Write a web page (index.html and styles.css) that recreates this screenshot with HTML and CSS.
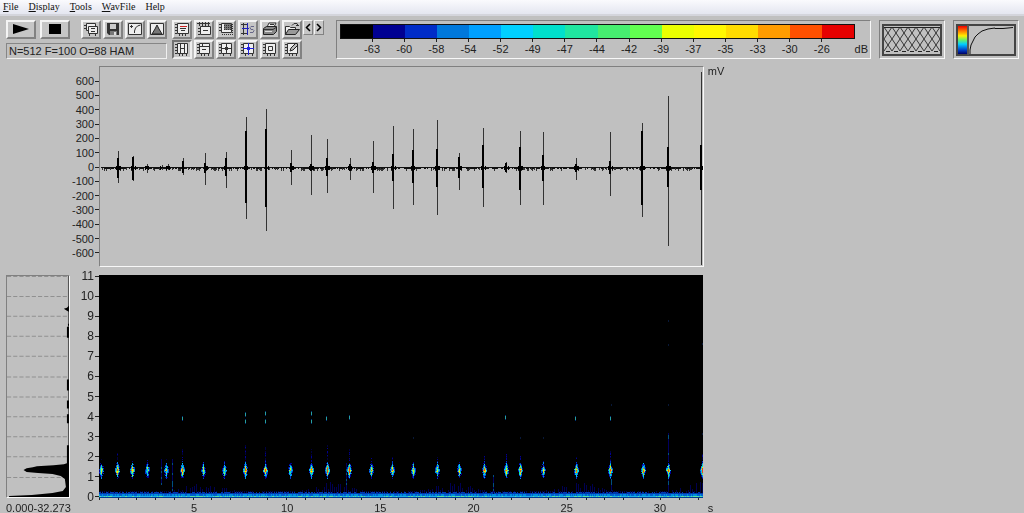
FILE: index.html
```html
<!DOCTYPE html>
<html lang="en">
<head>
<meta charset="utf-8">
<title>Sound Analysis</title>
<link rel="stylesheet" href="styles.css">
</head>
<body>
<nav class="menubar" aria-label="Main menu">
  <button class="menu"><u>F</u>ile</button>
  <button class="menu"><u>D</u>isplay</button>
  <button class="menu"><u>T</u>ools</button>
  <button class="menu"><u>W</u>avFile</button>
  <button class="menu">Help</button>
</nav>

<header class="toolbar">
  <div class="transport">
    <div class="row">
      <button class="btn wide" aria-label="Play"><svg width="20" height="13" viewBox="0 0 20 13"><path d="M2 2L18 7L2 12z"/></svg></button>
      <button class="btn wide" aria-label="Stop"><svg width="12" height="13" viewBox="0 0 12 13"><path d="M0 2h12v10H0z"/></svg></button>
      <div class="row tight push">
        <button class="btn" aria-label="Copy"><svg class="ico" viewBox="0 0 16 14"><path class="w" d="M3.500 1.500h9v7h-9z"/><path class="w" d="M5.500 4.500h9v7h-9z"/><path class="l" d="M1 3.500h3M1 6.500h3M8 6.500h4M8 9.500h4M6.500 12v2M12.500 12v2"/></svg></button>
        <button class="btn" aria-label="Save"><svg class="ico" viewBox="0 0 16 14"><path fill="#333" d="M2 1h12v12H4l-2-2z"/><path fill="#ccc" d="M5 2h6v5H5z"/><path fill="#777" d="M5 9h7v4H5z"/><path fill="#ddd" d="M9 10h2v3H9z"/></svg></button>
        <button class="btn" aria-label="Transfer curve"><svg class="ico" viewBox="0 0 16 14"><path class="w" d="M1.500 1.500h13v11h-13z"/><path class="l" d="M3 4.500h3M4.500 3v3M7.500 11V9l1-3 2-2 3-1"/></svg></button>
        <button class="btn" aria-label="Spectrum"><svg class="ico" viewBox="0 0 16 14"><path class="w" d="M1.500 1.500h13v11h-13z"/><path fill="#777" stroke="#222" d="M3 12L6 7l2-4 2 4 3 5z"/></svg></button>
      </div>
    </div>
    <output class="status">N=512 F=100 O=88 HAM</output>
  </div>

  <div class="tools">
    <button class="btn" aria-label="Label page"><svg class="ico" viewBox="0 0 16 14"><path class="w" d="M3.500 1.500h11v10h-11z"/><path stroke="#c22" d="M6 4.500h7"/><path class="l" d="M6 6.500h6M7 8.500h4M1 2.500h2M1 5.500h2M1 8.500h2M1 11.500h2M5.500 12v2M8.500 12v2M11.500 12v2"/></svg></button>
    <button class="btn" aria-label="Measure width"><svg class="ico" viewBox="0 0 16 14"><path class="l" d="M1 1.500h13M3.500 0v4M6.500 0v4M9.500 0v4M12.500 0v4"/><path class="w" d="M4.500 4.500h10v8h-10z"/><path class="l" d="M7 8.500h5M2 6.500h2M2 9.500h2M2 12.500h2"/></svg></button>
    <button class="btn" aria-label="Select region"><svg class="ico" viewBox="0 0 16 14"><path class="w" d="M3.500 1.500h10v9h-10z"/><path fill="#777" d="M6 2h7v6H6z"/><path stroke="#333" stroke-dasharray="1 1" d="M6 3.500h7M6 5.500h7M6 7.500h7M4 12.500h11M14.500 2v10"/><path class="l" d="M1 2.500h2M1 5.500h2M1 8.500h2"/></svg></button>
    <button class="btn" aria-label="Section"><svg class="ico" viewBox="0 0 16 14"><path class="l" d="M3.500 1v12M1 2.500h7M1 11.500h7"/><path stroke="#22b" d="M2 6.500h7M7.500 1v12"/><path fill="none" stroke="#668" d="M14 4.500h-3l-1 1 1 2h2l1 1-1 2h-3"/></svg></button>
    <button class="btn" aria-label="Print"><svg class="ico" viewBox="0 0 16 14"><path class="w" d="M5 5l2-4h7l-2 4z"/><path fill="#888" stroke="#222" d="M1.500 6.500l3-2h10v5l-3 3h-10z"/><path stroke="#ddd" d="M3 9.500h7"/><path class="l" d="M2 7.500h9l3-2M8 2.500h4"/></svg></button>
    <button class="btn" aria-label="Open"><svg class="ico" viewBox="0 0 16 14"><path class="w" d="M1.500 12.500v-8h4l1 1h5v2"/><path fill="#999" stroke="#222" d="M1.500 12.500l3-5h11l-4 5z"/><path class="l" d="M8 3.500l2-2h3l1 2M12 3.500h3"/></svg></button>
    <button class="btn on" aria-label="Vertical cursors"><svg class="ico" viewBox="0 0 16 14"><path class="w" d="M3.500 1.500h10v10h-10z"/><path class="l" d="M6.500 1v11M10.500 1v11M7 6.500h3M1 2.500h2M1 5.500h2M1 8.500h2M1 11.500h2M5.500 12v2M8.500 12v2M12.500 12v2"/></svg></button>
    <button class="btn" aria-label="Horizontal cursor"><svg class="ico" viewBox="0 0 16 14"><path class="w" d="M3.500 1.500h10v10h-10z"/><path class="l" d="M3 4.500h10M6.500 2v3M6 7.500h4M1 2.500h2M1 5.500h2M1 8.500h2M1 11.500h2M5.500 12v2M8.500 12v2M12.500 12v2"/></svg></button>
    <button class="btn" aria-label="Cross cursor"><svg class="ico" viewBox="0 0 16 14"><path class="w" d="M3.500 1.500h10v10h-10z"/><path class="l" d="M3 6.500h11M8.500 1v11M7 5.500h3M7 7.500h3M1 2.500h2M1 5.500h2M1 8.500h2M1 11.500h2M5.500 12v2M12.500 12v2"/></svg></button>
    <button class="btn" aria-label="Harmonic cursor"><svg class="ico" viewBox="0 0 16 14"><path class="w" d="M3.500 1.500h10v10h-10z"/><path stroke="#22d" d="M3 6.500h11M8.500 1v12M7 5.500h3M7 7.500h3"/><path class="l" d="M1 2.500h2M1 5.500h2M1 8.500h2M1 11.500h2M5.500 12v2M12.500 12v2"/></svg></button>
    <button class="btn" aria-label="Box cursor"><svg class="ico" viewBox="0 0 16 14"><path class="w" d="M3.500 1.500h10v10h-10z"/><path class="w" d="M6.500 4.500h4v4h-4z"/><path class="l" d="M1 2.500h2M1 5.500h2M1 8.500h2M1 11.500h2M5.500 12v2M8.500 12v2M12.500 12v2"/></svg></button>
    <button class="btn" aria-label="Draw"><svg class="ico" viewBox="0 0 16 14"><path class="w" d="M3.500 1.500h10v10h-10z"/><path class="l" d="M1 2.500h2M1 5.500h2M1 8.500h2M1 11.500h2M5.500 12v2M8.500 12v2M12.500 12v2"/><path fill="#bbb" stroke="#222" d="M6 9l1-3 5-5 2 2-5 5z"/></svg></button>
  </div>
  <div class="row steps">
    <button class="btn step" aria-label="Previous"><svg width="6" height="9" viewBox="0 0 6 9"><path fill="none" stroke="#000" stroke-width="1.500" d="M5 1L1.500 4.500L5 8"/></svg></button>
    <button class="btn step" aria-label="Next"><svg width="6" height="9" viewBox="0 0 6 9"><path fill="none" stroke="#000" stroke-width="1.500" d="M1 1l3.500 3.500L1 8"/></svg></button>
  </div>

  <div class="scale inset">
    <div class="bar"><i class="c0"></i><i class="c1"></i><i class="c2"></i><i class="c3"></i><i class="c4"></i><i class="c5"></i><i class="c6"></i><i class="c7"></i><i class="c8"></i><i class="c9"></i><i class="c10"></i><i class="c11"></i><i class="c12"></i><i class="c13"></i><i class="c14"></i><i class="c15"></i></div>
    <div class="levels"><span>-63</span><span>-60</span><span>-58</span><span>-54</span><span>-52</span><span>-49</span><span>-47</span><span>-44</span><span>-42</span><span>-39</span><span>-37</span><span>-35</span><span>-33</span><span>-30</span><span>-26</span><span class="unit">dB</span></div>
  </div>

  <button class="thumb inset" aria-label="Window overlap">
    <svg viewBox="0 0 60 32"><defs><pattern id="mesh" width="8" height="12" patternUnits="userSpaceOnUse" x="2" y="3"><path fill="none" stroke="#333" d="M0 0L8 12M8 0L0 12"/></pattern></defs>
    <path fill="none" stroke="#444" stroke-width="2" d="M1 1h58v30H1z"/><path fill="url(#mesh)" d="M2 3h56v24H2z"/><path stroke="#222" d="M2 3.500h56"/><path stroke="#222" stroke-dasharray="4 4" d="M4 27.500h54"/></svg>
  </button>
  <button class="thumb inset" aria-label="Colour curve">
    <svg viewBox="0 0 60 32"><defs><linearGradient id="hue" x2="0" y2="1"><stop offset="0" stop-color="#e00"/><stop offset=".2" stop-color="#f80"/><stop offset=".35" stop-color="#fe0"/><stop offset=".5" stop-color="#6e6"/><stop offset=".65" stop-color="#0cf"/><stop offset=".85" stop-color="#04c"/><stop offset="1" stop-color="#006"/></linearGradient></defs>
    <path fill="none" stroke="#444" stroke-width="2" d="M1 1h58v30H1z"/><path fill="url(#hue)" d="M2 2h9v28H2z"/><path stroke="#555" stroke-width="2" d="M12 1v30"/><path fill="none" stroke="#111" d="M14 30v-4l1-5 2-4 2-4 3-3 4-3 6-2 7-1V4.500h8l10-1"/></svg>
  </button>
</header>

<main class="plots">
  <div class="yaxis volts"><span>600</span><span>500</span><span>400</span><span>300</span><span>200</span><span>100</span><span>0</span><span>-100</span><span>-200</span><span>-300</span><span>-400</span><span>-500</span><span>-600</span></div>
  <div class="wave inset"><canvas id="wave" aria-label="Waveform"></canvas></div>
  <div class="unit-mv">mV</div>

  <div class="spectrum inset">
    <svg viewBox="0 0 60 222" preserveAspectRatio="none" aria-label="Average spectrum">
      <path class="grid" d="M0 .500h60M0 20.500h60M0 40.500h60M0 60.500h60M0 80.500h60M0 101.500h60M0 121.500h60M0 141.500h60M0 161.500h60M0 181.500h60M0 202.500h60"/>
      <path fill="#555" d="M59 0h1v222h-1z"/>
      <path d="M60 30l-2 2-3 1 3 2 2 1zM58 51h2v11h-2zM58 104h2v11h-2zM58 125h2v8h-2zM58 139h2v9h-2zM59 48h1v2h-1zM58 170h2v52h-2z"/>
      <path d="M60 176L58 188L55 189L45 190L29 191L25 192L19 193L16 195L19 197L30 198L44 199L52 201L56 204L57 212L54 216L44 218L24 220L2 221V222H60z"/>
    </svg>
  </div>
  <div class="yaxis khz"><span>11</span><span>10</span><span>9</span><span>8</span><span>7</span><span>6</span><span>5</span><span>4</span><span>3</span><span>2</span><span>1</span><span>0</span></div>
  <div class="sono"><canvas id="sono" aria-label="Spectrogram"></canvas></div>

  <div class="range">0.000-32.273</div>
  <div class="xaxis"><span>5</span><span>10</span><span>15</span><span>20</span><span>25</span><span>30</span></div>
  <div class="unit-s">s</div>
</main>
<script src="plots.js"></script>
</body>
</html>
```

FILE: styles.css
```css
* { box-sizing: border-box; }

body {
  margin: 0;
  min-height: 100vh;
  overflow: hidden;
  background: #c0c0c0;
  color: #222;
  font: 11px/14px "Liberation Sans", Arial, sans-serif;
}

button {
  font: inherit;
  color: inherit;
  margin: 0;
  padding: 0;
}

svg, canvas { display: block; }

.menubar {
  display: flex;
  gap: 10px;
  height: 16px;
  padding: 0 3px;
  background: linear-gradient(#fafafd, #e4e6f0);
  border-bottom: 2px solid #d4d5dc;
}

.menu {
  border: 0;
  background: none;
  color: #111;
  font: 10px/14px "Liberation Serif", serif;
}

.toolbar {
  display: flex;
  align-items: flex-start;
  padding: 4px 5px 0 6px;
  height: 50px;
}

.row { display: flex; gap: 4px; }
.tight { gap: 2px; }
.push { margin-left: auto; }
.transport { width: 161px; }

.btn {
  display: flex;
  align-items: flex-start;
  justify-content: center;
  width: 20px;
  height: 19px;
  background: #c6c6c6;
  border: 2px solid;
  border-color: #f4f4f4 #828282 #828282 #f4f4f4;
}

.btn.wide { width: 30px; }
.btn.on { border-color: #707070 #eee #eee #707070; }
.ico { width: 16px; height: 14px; }
.ico .w { fill: #eee; stroke: #333; }
.ico .l { fill: none; stroke: #333; }

.status {
  display: block;
  height: 16px;
  margin-top: 4px;
  padding-left: 2px;
  border: 1px solid;
  border-color: #868686 #f0f0f0 #f0f0f0 #868686;
}

.tools {
  display: grid;
  grid-template-columns: repeat(6, 20px);
  gap: 1px 2px;
  margin-left: 5px;
}

.steps { gap: 1px; margin-left: 1px; }
.btn.step { align-items: center; width: 10px; height: 15px; border-width: 1px; }

.inset {
  border: 1px solid;
  border-color: #808080 #f8f8f8 #f8f8f8 #808080;
}

.scale {
  flex: 1;
  height: 39px;
  margin-left: 12px;
  padding: 3px 0 0 3px;
}

.bar {
  display: flex;
  height: 15px;
  margin-right: 15px;
  border: 1px solid #111;
}

.bar i { flex: 1; }
.c0 { background: #000; }
.c1 { background: #000092; }
.c2 { background: #002cc8; }
.c3 { background: #0078dc; }
.c4 { background: #00a0ff; }
.c5 { background: #00d0ff; }
.c6 { background: #00e0cc; }
.c7 { background: #20e6a0; }
.c8 { background: #46ee70; }
.c9 { background: #62ff50; }
.c10 { background: #eaff00; }
.c11 { background: #fff800; }
.c12 { background: #ffdc00; }
.c13 { background: #ff9c00; }
.c14 { background: #ff5000; }
.c15 { background: #e60000; }

.levels {
  display: grid;
  grid-template-columns: repeat(16, 1fr);
  padding-left: 16px;
  text-align: center;
}

.levels span::before {
  content: "";
  display: block;
  width: 1px;
  height: 3px;
  margin: 0 auto;
  background: #222;
}

.levels .unit { text-align: right; padding-right: 2px; }
.levels .unit::before { background: none; }

.thumb {
  width: 66px;
  height: 39px;
  margin-left: 8px;
  background: none;
}

.thumb svg {
  width: 60px;
  height: 32px;
  margin: 0 auto;
}

.plots {
  display: grid;
  grid-template-columns: 65px 28px minmax(0, 17fr) minmax(0, 9fr);
  grid-template-rows: 201px 223px auto;
  row-gap: 8px;
  padding-left: 6px;
}

.plots canvas { width: 100%; height: 100%; }

.yaxis {
  display: flex;
  flex-direction: column;
  text-align: right;
}

.yaxis span {
  flex: 1;
  display: flex;
  align-items: center;
  justify-content: flex-end;
  gap: 1px;
}

.yaxis span::after {
  content: "";
  width: 4px;
  height: 1px;
  background: #222;
}

.volts {
  grid-column: 2;
  padding: 8px 0 7px;
}

.khz {
  margin: -9px 0;
  font-size: 12px;
}

.unit-mv { padding-left: 4px; line-height: 10px; }

.spectrum { margin-right: 1px; }
.spectrum svg { width: 100%; height: 100%; }
.spectrum .grid { stroke: #909090; stroke-dasharray: 4 2; }

.sono { background: #000; margin-right: 1px; }

.range, .xaxis, .unit-s {
  margin-top: -8px;
  padding-top: 4px;
  line-height: 12px;
}

.range { grid-column: 1; white-space: nowrap; }

.xaxis {
  grid-column: 3;
  display: flex;
  padding-left: 8%;
  background: repeating-linear-gradient(90deg, #222 0 1px, transparent 1px 3.093%) 0 0 / 100% 2px no-repeat;
}

.xaxis span { flex: none; width: 16.750%; text-align: center; }
.unit-s { padding-left: 4px; }
```

FILE: plots.js
```js
const DURATION = 603;

let seed = 7;
function rnd() {
  seed = (seed * 16807) % 2147483647;
  return seed / 2147483647;
}

// [position, peak, trough, core top, core bottom]
const pulses = [
  [18, 84, 116, 91, 111], [33, 89, 114, 90, 113], [47, 97, 106, 99, 102],
  [62, 98, 103, 100, 101], [68, 97, 103, 99, 102], [83, 91, 108, 94, 106],
  [105, 86, 118, 96, 106], [126, 85, 121, 91, 109], [146, 50, 152, 64, 136],
  [166, 42, 164, 62, 140], [191, 83, 118, 96, 105], [211, 68, 128, 97, 104],
  [227, 72, 126, 91, 109], [250, 91, 113, 97, 104], [273, 74, 126, 95, 106],
  [293, 59, 142, 87, 114], [313, 62, 138, 83, 116], [337, 53, 148, 82, 120],
  [359, 86, 123, 90, 111], [383, 61, 140, 78, 121], [406, 95, 106, 96, 105],
  [420, 64, 138, 80, 123], [443, 65, 138, 88, 114], [476, 91, 113, 97, 105],
  [510, 65, 129, 94, 107], [542, 56, 150, 64, 138], [568, 29, 179, 80, 120],
  [601, 5, 198, 78, 123]
];

// [position, strength, reach above the call]
const calls = [
  [2, .5, 10], [18, .8, 16], [33, .8, 9], [48, .3, 7], [67, .4, 12],
  [83, .9, 20], [104, .3, 8], [125, .4, 8], [146, .9, 24], [166, 1, 22],
  [191, .4, 9], [212, .9, 22], [228, 1, 24], [250, 1, 20], [272, .6, 12],
  [293, .7, 12], [313, .6, 9], [337, .6, 12], [359, .5, 9], [384, .8, 14],
  [406, .8, 15], [420, .8, 13], [443, .4, 9], [476, .8, 13], [510, 1, 18],
  [543, .8, 10], [568, .8, 30], [602, .9, 15]
];

const harmonics = [
  [83, 143], [146, 139], [146, 146], [166, 138], [166, 146], [212, 138],
  [212, 146], [227, 143], [250, 142], [405, 142], [475, 143], [510, 143]
];

const palette = ["#000040", "#000092", "#0038c8", "#0088e8", "#00c8f0", "#20e6a0", "#a8f040", "#ffe000", "#ff7000", "#e84018"];

function surface(id) {
  const c = document.getElementById(id);
  c.width = c.clientWidth;
  c.height = c.clientHeight;
  const g = c.getContext("2d");
  const k = c.width / DURATION;
  return {
    w: c.width,
    h: c.height,
    k,
    box(color, x, y, w, h) {
      g.fillStyle = color;
      g.fillRect(x, y, w, h);
    }
  };
}

function drawWave() {
  const s = surface("wave");
  for (let x = 1; x < s.w; x++) {
    const r = rnd();
    const near = pulses.some(p => Math.abs(p[0] * s.k - x) < 3);
    s.box("#111", x, 100, 1, near || r > .3 ? 2 : 1);
    if (r > .72) s.box("#333", x, 101 + Math.floor(rnd() * 2), 1, 2);
    if (near && r > .4) s.box("#000", x, 99, 1, 4);
  }
  for (const [t, top, bottom, c1, c2] of pulses) {
    const x = Math.round(t * s.k);
    s.box("#333", x, top, 1, bottom - top);
    s.box("#000", x - 1, c1, 2, c2 - c1);
  }
}

function drawSono() {
  const s = surface("sono");
  for (let x = 0; x < s.w; x++) {
    const t = x / s.k;
    let hump = 0;
    for (const c of [105, 230, 353, 480, 602]) hump = Math.max(hump, 1 - Math.abs(t - c) / 38);
    if (x % 2 && rnd() < .8) s.box("#000050", x, s.h - 7 - Math.floor(hump * 11 * rnd()), 1, 16);
    s.box("#0038b0", x, s.h - 5 - Math.floor(rnd() * 2), 1, 6);
    s.box(rnd() > .5 ? "#0090dc" : "#0060d0", x, s.h - 4, 1, 3);
    s.box(rnd() < .25 + hump * .5 ? "#58e0a0" : "#20b0e8", x, s.h - 2, 1, 1);
    s.box("#003c90", x, s.h - 1, 1, 1);
  }
  for (const [t, strength, reach] of calls) {
    const cx = Math.round(t * s.k);
    for (let y = 194 - reach; y < 185; y++) {
      if (rnd() < .75) s.box(palette[rnd() < .6 ? 0 : 1], cx, y, 1, 1);
    }
    for (let y = 185; y <= 203; y++) {
      const v = 1 - Math.abs(y - 195) / 10;
      for (let dx = -2; dx <= 2; dx++) {
        const power = (v * 1.15 - Math.abs(dx) * .36) * (strength * .5 + .5) + (rnd() - .5) * .4;
        const n = Math.min(9, Math.floor(power * 9));
        if (n > 0) s.box(palette[n], cx + dx, y, 1, 1);
      }
    }
  }
  for (const [t, y] of harmonics) {
    s.box("#003478", Math.round(t * s.k), y - 2, 1, 5);
    s.box("#28a0a0", Math.round(t * s.k), y - 1, 1, 3);
  }
  for (const [t, y, h] of [[62, 184, 25], [73, 184, 32], [247, 188, 28], [393, 200, 19], [511, 204, 12], [568, 158, 28], [568, 204, 12]]) {
    s.box("#000060", Math.round(t * s.k), y, 1, h);
    for (let j = 0; j < h; j += 2) if (rnd() < .35) s.box("#005080", Math.round(t * s.k), y + j, 1, 2);
  }
  for (const [t, y] of [[313, 162], [420, 162], [443, 162], [511, 129], [568, 129], [568, 69], [568, 45], [602, 68], [602, 158]]) {
    s.box("#081838", Math.round(t * s.k), y, 1, 2);
  }
}

function draw() {
  seed = 7;
  drawWave();
  drawSono();
}

draw();
window.addEventListener("resize", draw);
```
